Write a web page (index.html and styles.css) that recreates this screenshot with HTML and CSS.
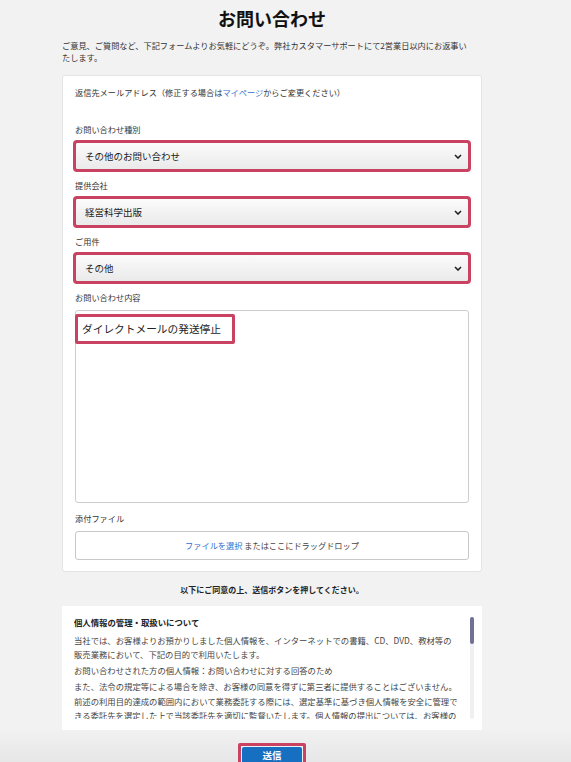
FILE: index.html
```html
<!DOCTYPE html>
<html lang="ja">

<head>
    <meta charset="UTF-8">
    <meta name="viewport" content="width=device-width, initial-scale=1.0">
    <title>お問い合わせ</title>
    <link rel="stylesheet" href="styles.css">
</head>

<body>
    <div class="page">
        <h1 class="page-title">お問い合わせ</h1>
        <p class="intro">ご意見、ご質問など、下記フォームよりお気軽にどうぞ。弊社カスタマーサポートにて2営業日以内にお返事いたします。</p>

        <form class="card">
            <div class="reply-mail">返信先メールアドレス（修正する場合は<a href="#" class="link">マイページ</a>からご変更ください）</div>

            <div class="field">
                <label class="field-label" for="kind">お問い合わせ種別</label>
                <div class="select-wrap mark">
                    <select id="kind" class="select">
                        <option>その他のお問い合わせ</option>
                    </select>
                    <svg class="chevron" width="8" height="5" viewBox="0 0 8 5"><polyline points="1,1 4,4 7,1" fill="none" stroke="#222" stroke-width="1.6" /></svg>
                </div>
            </div>

            <div class="field">
                <label class="field-label" for="company">提供会社</label>
                <div class="select-wrap mark">
                    <select id="company" class="select">
                        <option>経営科学出版</option>
                    </select>
                    <svg class="chevron" width="8" height="5" viewBox="0 0 8 5"><polyline points="1,1 4,4 7,1" fill="none" stroke="#222" stroke-width="1.6" /></svg>
                </div>
            </div>

            <div class="field">
                <label class="field-label" for="subject">ご用件</label>
                <div class="select-wrap mark">
                    <select id="subject" class="select">
                        <option>その他</option>
                    </select>
                    <svg class="chevron" width="8" height="5" viewBox="0 0 8 5"><polyline points="1,1 4,4 7,1" fill="none" stroke="#222" stroke-width="1.6" /></svg>
                </div>
            </div>

            <div class="field">
                <div class="field-label">お問い合わせ内容</div>
                <div class="textarea">
                    <span class="message mark-box">ダイレクトメールの発送停止</span>
                </div>
            </div>

            <div class="field">
                <div class="field-label">添付ファイル</div>
                <div class="dropzone"><a href="#" class="link">ファイルを選択</a> またはここにドラッグドロップ</div>
            </div>
        </form>

        <p class="consent">以下にご同意の上、送信ボタンを押してください。</p>

        <div class="privacy">
            <div class="privacy-scroll">
                <h2 class="privacy-title">個人情報の管理・取扱いについて</h2>
                <p>当社では、お客様よりお預かりしました個人情報を、インターネットでの書籍、CD、DVD、教材等の販売業務において、下記の目的で利用いたします。</p>
                <p>お問い合わせされた方の個人情報：お問い合わせに対する回答のため</p>
                <p>また、法令の規定等による場合を除き、お客様の同意を得ずに第三者に提供することはございません。前述の利用目的達成の範囲内において業務委託する際には、選定基準に基づき個人情報を安全に管理できる委託先を選定した上で当該委託先を適切に監督いたします。個人情報の提出については、お客様の任意となりますが、必要な情報をご提供いただけない場合は、お問い合わせへの回答ができない場合がございます。</p>
                <p>お客様ご本人から個人情報の利用目的の通知、開示、内容の訂正、追加または削除、利用の停止、消去および第三者への提供の停止のお申し出があった場合には、ご本人であることを確認させていただいた上で、合理的な期間および範囲で対応いたします。</p>
            </div>
            <div class="scrollbar"><div class="scrollbar-thumb"></div></div>
        </div>
    </div>

    <div class="footer">
        <div class="footer-inner">
            <span class="mark-box submit-mark">
                <button type="button" class="submit">送信</button>
            </span>
        </div>
    </div>
</body>

</html>
```

FILE: styles.css
```css
body {
    margin: 0;
    padding: 0;
    background-color: #f2f2f2;
    font-family: "Noto Sans CJK JP", sans-serif;
    color: #333;
}

.page {
    width: 420px;
    margin-left: 62px;
}

.page-title {
    margin: 6px 0 0;
    font-size: 18px;
    line-height: 24px;
    font-weight: bold;
    text-align: center;
    color: #111;
}

.intro {
    margin: 9px 0 0;
    max-width: 410px;
    font-size: 8.2px;
    line-height: 12px;
}

.link {
    color: #2f6fd3;
    text-decoration: none;
}

.card {
    margin-top: 12px;
    padding: 10px 12px 11px;
    background-color: #fff;
    border: 1px solid #e4e4e4;
    border-radius: 3px;
    box-sizing: border-box;
}

.reply-mail {
    font-size: 8.2px;
    line-height: 12px;
    margin-bottom: 24.5px;
}

.field {
    margin-top: 9px;
}

.reply-mail + .field {
    margin-top: 0;
}

.field-label {
    display: block;
    font-size: 8.2px;
    line-height: 12px;
    margin-bottom: 7px;
}

/* red annotation frames */
.mark {
    outline: 3px solid #c94262;
    outline-offset: -1px;
    border-radius: 2px;
}

.mark-box {
    border: 3px solid #c94262;
    border-radius: 2px;
}

.select-wrap {
    position: relative;
}

.select {
    display: block;
    width: 100%;
    height: 28px;
    margin: 0;
    padding: 0 24px 0 9px;
    appearance: none;
    -webkit-appearance: none;
    font-family: inherit;
    font-size: 9.5px;
    color: #222;
    background: linear-gradient(#fbfbfb, #eaeaea);
    border: 1px solid #d2d2d2;
    border-radius: 3px;
    box-sizing: border-box;
}

.chevron {
    position: absolute;
    right: 7px;
    top: 12px;
}

.textarea {
    height: 193px;
    padding-top: 3px;
    border: 1px solid #cdcdcd;
    border-radius: 3px;
    box-sizing: border-box;
}

.message {
    display: inline-block;
    margin-left: -1px;
    padding: 0 11px 0 4px;
    font-size: 10.7px;
    line-height: 24px;
    color: #222;
}

.dropzone {
    height: 29px;
    line-height: 27px;
    font-size: 8.2px;
    color: #444;
    text-align: center;
    border: 1px solid #c8c8c8;
    border-radius: 3px;
    box-sizing: border-box;
}

.consent {
    margin: 12px 0 10px;
    font-size: 8px;
    line-height: 12px;
    font-weight: bold;
    text-align: center;
    color: #222;
}

.privacy {
    position: relative;
    height: 124px;
    padding: 11px 23.2px 11px 12px;
    background-color: #fff;
    box-sizing: border-box;
}

.privacy-scroll {
    height: 102px;
    overflow: hidden;
    text-spacing-trim: space-all;
    line-break: anywhere;
}

.scrollbar {
    position: absolute;
    top: 11px;
    bottom: 11px;
    right: 8px;
    width: 4px;
    border-radius: 2px;
    background-color: #f0f0f2;
}

.scrollbar-thumb {
    height: 27px;
    border-radius: 2px;
    background-color: #717196;
}

.privacy-title {
    margin: 0 0 6px;
    font-size: 8.4px;
    line-height: 10px;
    font-weight: bold;
    color: #222;
}

.privacy-scroll p {
    margin: 0 0 1.5px;
    font-size: 8.35px;
    line-height: 14.5px;
    color: #444;
}

.footer {
    height: 34px;
    padding-top: 10px;
    box-sizing: border-box;
    background: linear-gradient(#f1f1f1, #e6e6e6);
    overflow: hidden;
}

.footer-inner {
    width: 420px;
    margin-left: 62px;
    text-align: center;
}

.submit-mark {
    display: inline-block;
    padding: 1px;
    background-color: #eef1f6;
}

.submit {
    display: block;
    width: 60px;
    height: 17px;
    padding: 0;
    border: none;
    border-radius: 2px;
    background-color: #176fc2;
    color: #fff;
    font-family: inherit;
    font-size: 9.5px;
    line-height: 17px;
    font-weight: bold;
    cursor: pointer;
}
```
